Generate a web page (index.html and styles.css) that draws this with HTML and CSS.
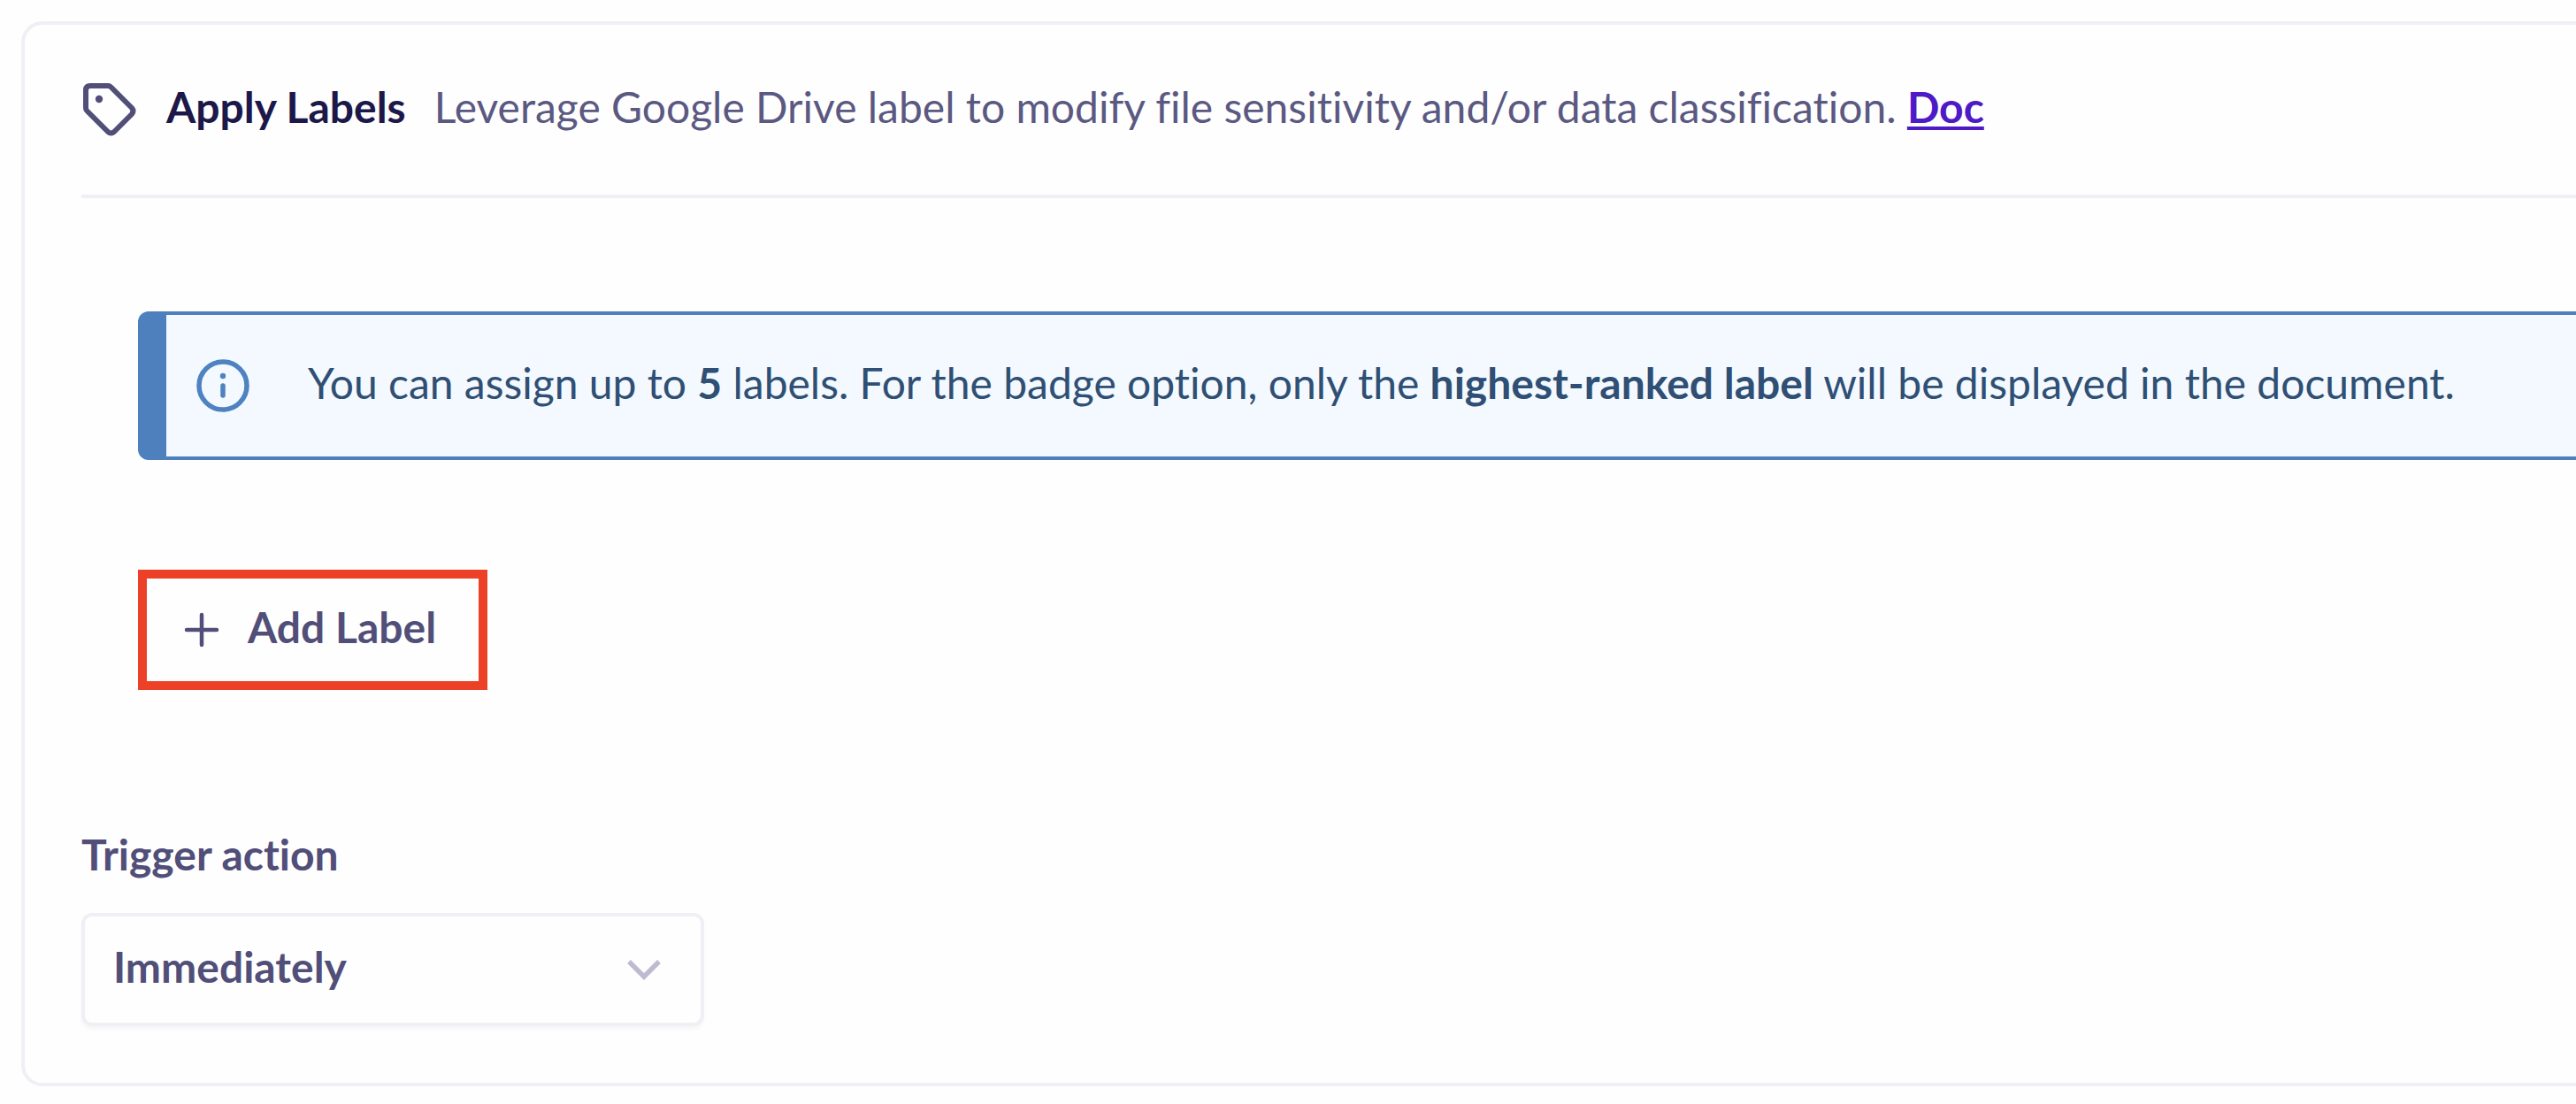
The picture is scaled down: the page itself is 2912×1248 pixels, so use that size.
FILE: index.html
```html
<!DOCTYPE html>
<html lang="en">
<head>
  <meta charset="utf-8">
  <meta name="viewport" content="width=device-width, initial-scale=1">
  <title>Apply Labels</title>
  <link rel="stylesheet" href="styles.css">
</head>
<body>
  <main class="card">
    <header class="card-header">
      <svg class="icon" viewBox="0 0 64 64" fill="none" stroke="currentColor" stroke-width="6" stroke-linejoin="round" aria-hidden="true">
        <path d="M10 5H30Q32 5 33.500 6.500L57 30Q60 33.500 57 37L37 57Q33.500 60 30 57L6.500 33.500Q5 32 5 30V10Q5 5 10 5Z"/>
        <circle cx="20" cy="20" r="4.200" fill="currentColor" stroke="none"/>
      </svg>
      <h1 class="title text">Apply Labels</h1>
      <p class="summary text">Leverage Google Drive label to modify file sensitivity and/or data classification. <a class="doc-link" href="#doc">Doc</a></p>
    </header>

    <section class="labels">
      <div class="notice">
        <svg class="icon" viewBox="0 0 64 64" fill="none" stroke="currentColor" stroke-width="5.500" aria-hidden="true">
          <circle cx="32" cy="32" r="27"/>
          <path d="M32 32V43" stroke-linecap="round"/>
          <circle cx="32" cy="21" r="3.200" fill="currentColor" stroke="none"/>
        </svg>
        <p class="text">You can assign up to <strong>5</strong> labels. For the badge option, only the <strong>highest-ranked label</strong> will be displayed in the document.</p>
      </div>
      <button class="add-label" type="button">
        <svg class="plus" viewBox="0 0 44 44" fill="none" stroke="currentColor" stroke-width="4.500" stroke-linecap="round" aria-hidden="true">
          <path d="M22 5V39M5 22H39"/>
        </svg>
        <span class="text">Add Label</span>
      </button>
    </section>

    <section class="trigger">
      <label class="trigger-label text" for="trigger-action">Trigger action</label>
      <div class="select-box">
        <select class="select" id="trigger-action">
          <option>Immediately</option>
        </select>
        <svg class="chevron" viewBox="0 0 44 44" fill="none" stroke="currentColor" stroke-width="5.500" stroke-linecap="square" aria-hidden="true">
          <path d="M7 15L22 30L37 15"/>
        </svg>
      </div>
    </section>
  </main>
</body>
</html>
```
FILE: styles.css
```css
* {
  box-sizing: border-box;
}

body {
  margin: 0;
  padding: 24px 0 20px 24px;
  background: #fefefe;
  color: #514f79;
  font-family: Lato, "Liberation Sans", sans-serif;
  font-size: 48px;
  line-height: 60px;
  font-variant-ligatures: none;
}

h1,
p {
  margin: 0;
}

strong {
  font-weight: 700;
}

/* Lifts text so its capitals centre against the icons beside it. */
.text {
  padding-bottom: 6px;
}

.icon {
  flex: none;
  width: 64px;
  height: 64px;
}

.card {
  padding: 0 0 64px 64px;
  border: 4px solid #f0eff5;
  border-right: 0;
  border-radius: 24px 0 0 24px;
  background: #fefefe;
}

.card-header {
  display: flex;
  align-items: center;
  gap: 32px;
  min-height: 196px;
  border-bottom: 4px solid #f0eff5;
}

.title {
  color: #1c1849;
  font-size: 48px;
  font-weight: 700;
}

.summary {
  color: #5b5982;
}

.doc-link {
  color: #4e1ac8;
  font-weight: 700;
  text-decoration-thickness: 4px;
  text-underline-offset: 4px;
  text-decoration-skip-ink: none;
}

.labels {
  display: flex;
  flex-direction: column;
  align-items: flex-start;
  gap: 124px;
  padding: 128px 0 0 64px;
}

.notice {
  display: flex;
  align-items: center;
  align-self: stretch;
  gap: 64px;
  min-height: 168px;
  padding: 0 32px;
  border: 4px solid #4e80bd;
  border-width: 4px 0 4px 32px;
  border-radius: 12px 0 0 12px;
  background: #f3f9fe;
  color: #2f4f74;
}

.notice .icon {
  color: #4e82c0;
}

.add-label {
  display: flex;
  align-items: center;
  gap: 30px;
  min-height: 136px;
  padding: 0 48px 0 40px;
  border: 10px solid #ec4027;
  background: #fefefe;
  color: inherit;
  font: inherit;
  font-weight: 700;
}

.plus {
  width: 44px;
  height: 44px;
}

.trigger {
  display: flex;
  flex-direction: column;
  align-items: flex-start;
  gap: 30px;
  padding-top: 156px;
}

.trigger-label {
  font-weight: 700;
}

.select-box {
  display: grid;
  align-items: center;
  width: 704px;
  max-width: 100%;
}

.select {
  grid-area: 1 / 1;
  width: 100%;
  height: 128px;
  padding: 0 96px 6px 32px;
  border: 4px solid #f0eff5;
  border-radius: 12px;
  background: #fefefe;
  box-shadow: 0 4px 4px rgba(28, 24, 73, 0.03);
  color: inherit;
  font: inherit;
  font-weight: 700;
  appearance: none;
}

.chevron {
  grid-area: 1 / 1;
  justify-self: end;
  width: 44px;
  height: 44px;
  margin-right: 46px;
  color: #bdbbcf;
  pointer-events: none;
}
```
